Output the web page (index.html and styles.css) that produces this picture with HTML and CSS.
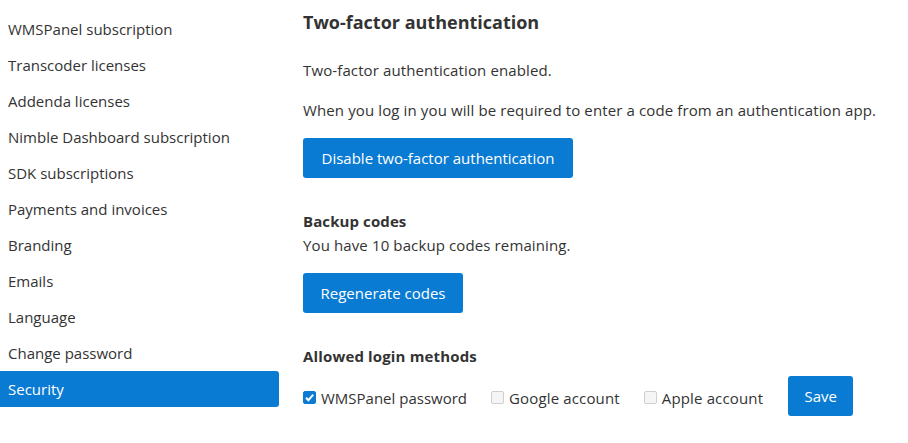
FILE: index.html
```html
<!DOCTYPE html>
<html>
<head>
<meta charset="utf-8">
<link rel="stylesheet" href="styles.css">
</head>
<body>
<div class="page">
  <nav class="sidebar">
    <a class="nav-item">WMSPanel subscription</a>
    <a class="nav-item">Transcoder licenses</a>
    <a class="nav-item">Addenda licenses</a>
    <a class="nav-item">Nimble Dashboard subscription</a>
    <a class="nav-item">SDK subscriptions</a>
    <a class="nav-item">Payments and invoices</a>
    <a class="nav-item">Branding</a>
    <a class="nav-item">Emails</a>
    <a class="nav-item">Language</a>
    <a class="nav-item">Change password</a>
    <a class="nav-item active">Security</a>
  </nav>
  <main class="content">
    <h2 class="title">Two-factor authentication</h2>
    <p class="text first">Two-factor authentication enabled.</p>
    <p class="text">When you log in you will be required to enter a code from an authentication app.</p>
    <button class="btn btn-disable">Disable two-factor authentication</button>
    <h4 class="subtitle">Backup codes</h4>
    <p class="text tight">You have 10 backup codes remaining.</p>
    <button class="btn btn-regen">Regenerate codes</button>
    <h4 class="subtitle methods">Allowed login methods</h4>
    <div class="methods-row">
      <label class="check"><span class="box checked"><svg viewBox="0 0 13 13" width="13" height="13"><path d="M3 6.8 L5.4 9.2 L10.2 3.6" fill="none" stroke="#fff" stroke-width="2"/></svg></span>WMSPanel password</label>
      <label class="check"><span class="box"></span>Google account</label>
      <label class="check"><span class="box"></span>Apple account</label>
      <button class="btn btn-save">Save</button>
    </div>
  </main>
</div>
</body>
</html>
```

FILE: styles.css
```css
* { box-sizing: border-box; }
html, body { margin: 0; padding: 0; background: #fff; }
body {
  font-family: "Open Sans", "Noto Sans", "Liberation Sans", sans-serif;
  font-size: 15px;
  color: #333;
}
.page {
  display: flex;
  width: 908px;
  height: 443px;
}
.sidebar {
  width: 279px;
  padding-top: 11px;
  display: flex;
  flex-direction: column;
}
.nav-item {
  display: block;
  height: 36px;
  line-height: 36px;
  padding-left: 8px;
  color: #333;
  border-radius: 0 3px 3px 0;
}
.nav-item.active {
  background: #0a7bd3;
  color: #fff;
}
.content {
  margin-left: 24px;
  flex: 1;
  display: flex;
  flex-direction: column;
  align-items: flex-start;
}
.title {
  margin: 8px 0 0;
  font-size: 18px;
  font-weight: 700;
  line-height: 28px;
  color: #333;
}
.text {
  margin: 0;
  line-height: 22px;
  letter-spacing: 0.12px;
}
.text.first { margin-top: 23px; }
.text + .text { margin-top: 18px; }
.btn {
  border: none;
  border-radius: 3px;
  background: #0a7bd3;
  color: #fff;
  font-family: inherit;
  font-size: 15px;
  height: 40px;
  padding: 0;
  cursor: pointer;
}
.btn-disable { margin-top: 17px; width: 270px; }
.subtitle {
  margin: 32px 0 0;
  font-size: 15px;
  font-weight: 700;
  line-height: 22px;
  letter-spacing: 0.1px;
}
.text.tight { margin-top: 2px; }
.btn-regen { margin-top: 17px; width: 160px; }
.subtitle.methods { margin-top: 32px; letter-spacing: 0.15px; }
.methods-row {
  margin-top: 9px;
  display: flex;
  align-items: center;
}
.check {
  display: flex;
  align-items: center;
  margin-right: 24px;
  line-height: 22px;
  padding-top: 3px;
  letter-spacing: 0.15px;
}
.check:first-child { letter-spacing: 0; }
.box {
  width: 13px;
  height: 13px;
  border: 1px solid #cfcfcf;
  border-radius: 2px;
  background: #f5f5f5;
  margin-right: 5px;
  display: inline-flex;
}
.box.checked {
  background: #0a7bd3;
  border-color: #0a7bd3;
}
.box svg { margin: -1px; }
.btn-save { width: 65px; margin-left: 1px; }
```
